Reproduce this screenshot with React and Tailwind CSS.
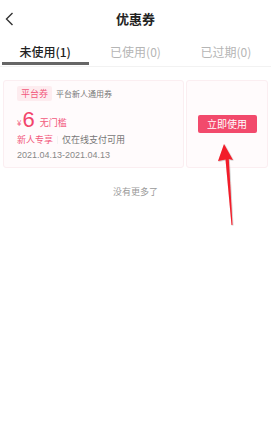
import React from 'react';

const tabs = [
  { label: '未使用(1)', active: true },
  { label: '已使用(0)', active: false },
  { label: '已过期(0)', active: false },
];

export default function App() {
  return (
    <div
      className="relative w-[271px] h-[431px] bg-white overflow-hidden"
      style={{ fontFamily: '"Noto Sans CJK SC", "Noto Sans", sans-serif' }}
    >
      {/* header */}
      <div className="relative h-[38px] flex items-center justify-center">
        <svg className="absolute left-[5px] top-[12px]" width="9" height="14" viewBox="0 0 9 14">
          <path d="M7.5 1 L1.5 7 L7.5 13" fill="none" stroke="#333" strokeWidth="1.4" />
        </svg>
        <span className="text-[13px] font-semibold text-[#222]">优惠券</span>
      </div>

      {/* tabs */}
      <div className="flex h-[29px] border-b border-[#f2f2f2]">
        {tabs.map((t) => (
          <div key={t.label} className="flex-1 flex flex-col items-center">
            <span
              className={`mt-[6px] text-[12px] leading-[16px] ${
                t.active ? 'text-[#222] font-medium' : 'text-[#b5b5b5]'
              }`}
            >
              {t.label}
            </span>
            {t.active && <div className="mt-[2px] w-[87px] h-[3px] bg-[#666]" />}
          </div>
        ))}
      </div>

      {/* coupon */}
      <div className="flex mt-[13px] px-[3px] gap-[2px]">
        <div className="w-[181px] h-[88px] rounded-[3px] border border-[#fbeef1] bg-[#fffbfc] pl-[13px] pt-[5px]">
          <div className="flex items-center gap-[4px]">
            <span className="px-[4px] h-[15px] leading-[15px] rounded-[2px] bg-[#fdecef] text-[#f2587b] text-[9px]">
              平台券
            </span>
            <span className="text-[8px] text-[#777]">平台新人通用券</span>
          </div>
          <div className="flex items-end mt-[9px] h-[20px]">
            <span className="text-[8px] text-[#f2587b] leading-[10px] mb-[2px]">¥</span>
            <span
              className="text-[22px] leading-[21px] text-[#f2456b] ml-[1px]"
              style={{ fontFamily: '"Liberation Sans", sans-serif' }}
            >
              6
            </span>
            <span className="text-[9px] text-[#f2587b] leading-[12px] ml-[5px] mb-[1px]">无门槛</span>
          </div>
          <div className="flex items-center mt-[4px] text-[9px] leading-[12px]">
            <span className="text-[#f2587b]">新人专享</span>
            <span className="mx-[4px] w-px h-[8px] bg-[#f3f3f3]" />
            <span className="text-[#777]">仅在线支付可用</span>
          </div>
          <div
            className="mt-[3px] text-[9px] leading-[12px] text-[#888]"
            style={{ fontFamily: '"Liberation Sans", sans-serif' }}
          >
            2021.04.13-2021.04.13
          </div>
        </div>
        <div className="flex-1 h-[88px] rounded-[3px] border border-[#fbeef1] bg-[#fffbfc] flex items-center justify-center">
          <button className="w-[59px] h-[18px] rounded-[2px] bg-[#f24a6c] text-white text-[10px] leading-[18px]">
            立即使用
          </button>
        </div>
      </div>

      <div className="mt-[17px] text-center text-[9px] text-[#999]">没有更多了</div>

      {/* annotation arrow */}
      <svg className="absolute left-[212px] top-[140px]" width="30" height="90" viewBox="0 0 30 90">
        <defs>
          <filter id="sh" x="-50%" y="-20%" width="200%" height="140%">
            <feDropShadow dx="0.5" dy="0.5" stdDeviation="0.7" floodColor="#000" floodOpacity="0.35" />
          </filter>
        </defs>
        <path
          d="M12 4 L21 20 L16.8 19 L20.5 85 L19.5 85 L13.5 19.5 L6 21 Z"
          fill="#f21f2a"
          filter="url(#sh)"
        />
      </svg>
    </div>
  );
}
